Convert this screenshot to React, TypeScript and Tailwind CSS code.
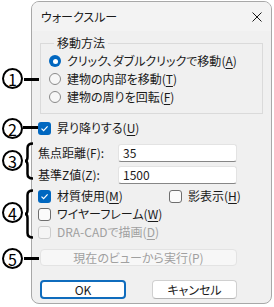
import React from 'react';

const Accel = ({ text, k }: { text: string; k?: string }) => (
  <span>
    {text}
    {k && (
      <>
        (<span className="underline underline-offset-[2px]">{k}</span>)
      </>
    )}
  </span>
);

function Radio({ checked, text, k }: { checked?: boolean; text: string; k: string }) {
  return (
    <div className="flex h-[18px] items-center gap-[6px]">
      {checked ? (
        <span className="flex h-[12px] w-[12px] items-center justify-center rounded-full bg-[#0067c0]">
          <span className="h-[5px] w-[5px] rounded-full bg-white" />
        </span>
      ) : (
        <span className="h-[12px] w-[12px] rounded-full border border-[#8a8a8a] bg-[#f7f7f7]" />
      )}
      <Accel text={text} k={k} />
    </div>
  );
}

function Check({ checked, disabled, text, k }: { checked?: boolean; disabled?: boolean; text: string; k: string }) {
  return (
    <div className={`flex h-[18px] items-center gap-[6px] ${disabled ? 'text-[#a0a0a0]' : ''}`}>
      {checked ? (
        <span className="flex h-[13px] w-[13px] items-center justify-center rounded-[3px] bg-[#0067c0]">
          <svg width="9" height="9" viewBox="0 0 9 9">
            <path d="M1.5 4.6 L3.6 6.6 L7.6 2.3" fill="none" stroke="white" strokeWidth="1.2" />
          </svg>
        </span>
      ) : (
        <span
          className={`h-[13px] w-[13px] rounded-[3px] border ${
            disabled ? 'border-[#cdcdcd] bg-[#f5f5f5]' : 'border-[#6e6e6e] bg-[#fbfbfb]'
          }`}
        />
      )}
      <Accel text={text} k={k} />
    </div>
  );
}

function Num({ n, top }: { n: string; top: string }) {
  return (
    <span
      className={`absolute left-[2px] ${top} flex h-[21px] w-[21px] items-center justify-center rounded-full border-2 border-black text-[16px] leading-none text-black`}
    >
      {n}
    </span>
  );
}

function Brace({ h }: { h: number }) {
  const m = h / 2;
  return (
    <svg width="10" height={h} viewBox={`0 0 10 ${h}`}>
      <path
        d={`M9 1.5 Q3.5 1.5 3.5 6 L3.5 ${m - 4} Q3.5 ${m} 1 ${m} Q3.5 ${m} 3.5 ${m + 4} L3.5 ${h - 6} Q3.5 ${h - 1.5} 9 ${h - 1.5}`}
        fill="none"
        stroke="black"
        strokeWidth="2.5"
      />
    </svg>
  );
}

export default function App() {
  return (
    <div className="relative h-[307px] w-[274px] overflow-hidden bg-white pt-[1px] font-['Noto_Sans_CJK_JP',sans-serif] text-[12px] leading-[16px] text-[#1a1a1a] [font-feature-settings:'palt']">
      <div className="ml-[31px] flex h-[303px] w-[241px] flex-col overflow-hidden rounded-[8px] border border-[#a8a8a8] bg-[#f0f0f0]">
        {/* title bar */}
        <div className="flex h-[29px] shrink-0 items-center justify-between bg-[#f3f3f3] pl-[9px] pr-[9px]">
          <span>ウォークスルー</span>
          <svg width="10" height="10" viewBox="0 0 10 10">
            <path d="M0.5 0.5 L9.5 9.5 M9.5 0.5 L0.5 9.5" stroke="#1a1a1a" strokeWidth="1" />
          </svg>
        </div>

        <div className="flex flex-col px-[8px]">
          <fieldset className="mt-[4px] border border-[#dadada] pb-[7px] pl-[8px] pt-[1px]">
            <legend className="ml-[5px] px-[3px] leading-[16px]">移動方法</legend>
            <Radio checked text="クリック、ダブルクリックで移動" k="A" />
            <Radio text="建物の内部を移動" k="T" />
            <Radio text="建物の周りを回転" k="F" />
          </fieldset>

          <div className="-ml-[2px] mt-[5px]">
            <Check checked text="昇り降りする" k="U" />
          </div>

          <div className="-ml-[2px] mt-[7px] flex flex-col gap-[4px]">
            <div className="flex h-[18px] items-center">
              <span className="w-[80px]">焦点距離(F):</span>
              <div className="flex h-[18px] w-[119px] items-center rounded-[3px] border border-[#e3e3e3] border-b-[#868686] bg-white pl-[4px]">
                35
              </div>
            </div>
            <div className="flex h-[18px] items-center">
              <span className="w-[80px]">基準Z値(Z):</span>
              <div className="flex h-[18px] w-[119px] items-center rounded-[3px] border border-[#e3e3e3] border-b-[#868686] bg-white pl-[4px]">
                1500
              </div>
            </div>
          </div>

          <div className="-ml-[2px] mt-[3px] grid grid-cols-[131px_1fr]">
            <Check checked text="材質使用" k="M" />
            <Check text="影表示" k="H" />
            <Check text="ワイヤーフレーム" k="W" />
            <div />
            <Check disabled text="DRA-CADで描画" k="D" />
          </div>

          <button className="mt-[8px] h-[17px] w-[197px] rounded-[4px] border border-[#e3e3e3] bg-[#f7f7f7] text-[#a0a0a0]">
            現在のビューから実行(P)
          </button>

          <div className="mt-[14px] flex w-[197px] justify-between">
            <button className="h-[19px] w-[86px] rounded-[4px] border-2 border-[#0f6cbd] bg-white leading-[14px]">
              OK
            </button>
            <button className="h-[19px] w-[85px] rounded-[4px] border border-[#d0d0d0] border-b-[#b4b4b4] bg-white">
              キャンセル
            </button>
          </div>
        </div>
      </div>

      {/* callouts */}
      <Num n="1" top="top-[68px]" />
      <span className="absolute left-[24px] top-[78px] h-[3px] w-[15px] bg-black" />
      <Num n="2" top="top-[118px]" />
      <span className="absolute left-[23px] top-[126px] h-[3px] w-[15px] bg-black" />
      <Num n="3" top="top-[150px]" />
      <span className="absolute left-[24px] top-[142px]">
        <Brace h={38} />
      </span>
      <Num n="4" top="top-[202px]" />
      <span className="absolute left-[24px] top-[189px]">
        <Brace h={50} />
      </span>
      <Num n="5" top="top-[248px]" />
      <span className="absolute left-[24px] top-[257px] h-[3px] w-[15px] bg-black" />
    </div>
  );
}
